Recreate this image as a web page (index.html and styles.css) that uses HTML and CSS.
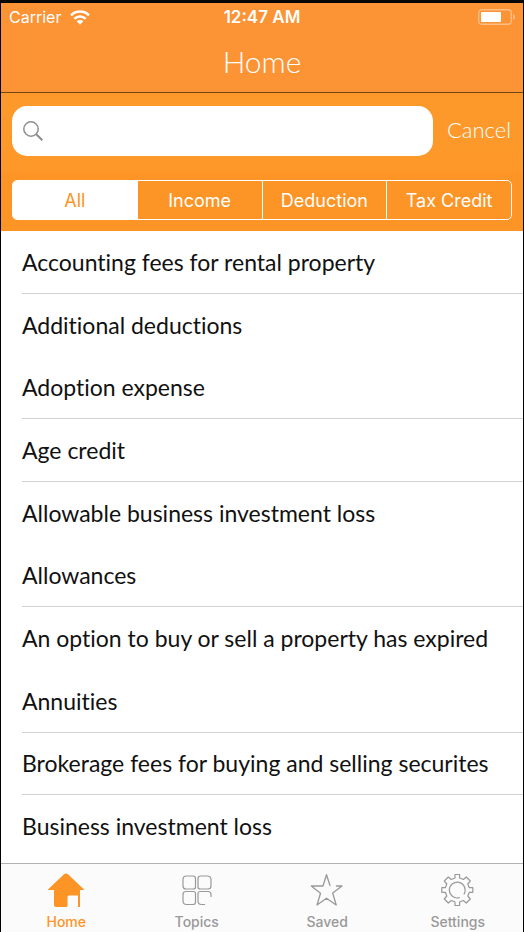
FILE: index.html
```html
<!DOCTYPE html>
<html lang="en">
<head>
<meta charset="utf-8">
<meta name="viewport" content="width=device-width, initial-scale=1">
<title>Home</title>
<link rel="stylesheet" href="styles.css">
</head>
<body>
<header class="navbar">
  <div class="status">
    <div class="carrier">Carrier
      <svg width="20" height="15" viewBox="0 0 20 15" aria-hidden="true">
        <g fill="none" stroke="#fff" stroke-width="2.5">
          <path d="M1 5.3C6 .3 14 .3 19 5.3"/>
          <path d="M4.3 8.8C7.5 5.7 12.500 5.700 15.700 8.800"/>
        </g>
        <path d="M6.700 11.300C8.500 9.500 11.500 9.500 13.300 11.300L10 14.700Z" fill="#fff"/>
      </svg>
    </div>
    <time class="clock">12:47 AM</time>
    <svg class="battery" width="38" height="16" viewBox="0 0 38 16" aria-hidden="true">
      <rect x="1.750" y=".75" width="32.500" height="14.500" rx="3" fill="none" stroke="#fff" stroke-opacity=".4" stroke-width="1.300"/>
      <rect x="4" y="3" width="20" height="10" rx="1" fill="#fff"/>
      <path d="M36 5q2 1 2 3t-2 3z" fill="#fff" fill-opacity=".4"/>
    </svg>
  </div>
  <h1 class="title">Home</h1>
</header>
<section class="filters">
  <form class="search">
    <label class="field">
      <svg width="20" height="20" viewBox="0 0 20 20" fill="none" stroke="#8e8e93" aria-hidden="true">
        <circle cx="8" cy="8" r="7.200" stroke-width="1.500"/>
        <path d="M13 13l6.300 6.300" stroke-width="2"/>
      </svg>
      <input type="text" aria-label="Search">
    </label>
    <button class="cancel" type="button">Cancel</button>
  </form>
  <div class="segments">
    <button class="segment active" type="button" aria-pressed="true">All</button>
    <button class="segment" type="button">Income</button>
    <button class="segment" type="button">Deduction</button>
    <button class="segment" type="button">Tax Credit</button>
  </div>
</section>
<main class="content">
  <ul class="list">
    <li class="row ruled">Accounting fees for rental property</li>
    <li class="row">Additional deductions</li>
    <li class="row ruled">Adoption expense</li>
    <li class="row ruled">Age credit</li>
    <li class="row">Allowable business investment loss</li>
    <li class="row ruled">Allowances</li>
    <li class="row">An option to buy or sell a property has expired</li>
    <li class="row ruled">Annuities</li>
    <li class="row ruled">Brokerage fees for buying and selling securites</li>
    <li class="row">Business investment loss</li>
  </ul>
</main>
<nav class="tabs">
  <a class="tab current" href="#home">
    <svg width="36" height="36" viewBox="0 0 36 36" aria-hidden="true">
      <path d="M16 2.200Q18 .6 20 2.200L36 17.500V18H32V35H30V23.500H21Q19.500 23.500 19.500 25V33.500Q19.500 35 18 35H8Q6 35 6 33V18H0V17.500Z" fill="currentColor"/>
    </svg>
    Home
  </a>
  <a class="tab" href="#topics">
    <svg width="36" height="36" viewBox="0 0 36 36" fill="none" stroke="currentColor" stroke-width="1.200" aria-hidden="true">
      <path d="M7.500 4H14Q16.500 4 16.500 6.500V15Q16.500 17 14.500 17H7Q4 17 4 14V7.500Q4 4 7.500 4Z"/>
      <path d="M21.500 4H28Q32 4 32 7.500V14Q32 17 29 17H21.500Q19 17 19 15V6.500Q19 4 21.500 4Z"/>
      <path d="M7 19.500H14.500Q16.500 19.500 16.500 21.500V30Q16.500 32.500 14 32.500H7.500Q4 32.500 4 29V22.500Q4 19.500 7 19.500Z"/>
      <path d="M32 25V22.500Q32 19.500 29 19.500H21.500Q19 19.500 19 21.500V29Q19 32.500 22.500 32.500H26"/>
    </svg>
    Topics
  </a>
  <a class="tab" href="#saved">
    <svg width="36" height="36" viewBox="0 0 36 36" fill="none" stroke="currentColor" stroke-width="1.300" stroke-linecap="round" stroke-linejoin="round" aria-hidden="true">
      <path d="M21 13.500L17.500 2.700L14 14H2.300L11.500 21.200L8 33L17.500 26.200L27.200 33L23.700 21L33 14H27.500"/>
    </svg>
    Saved
  </a>
  <a class="tab" href="#settings">
    <svg width="36" height="36" viewBox="0.700 0 36 36" fill="none" stroke="currentColor" stroke-width="1.200" stroke-linejoin="round" aria-hidden="true">
      <path d="M15.700 2.500H20.300V6L24 7.500L27 5L31 9L28.500 12L30 15.700H33.500V20.300H30L28.500 24L31 27L27 31L24 28.500L20.300 30V33.500H15.700V30L12 28.500L9 31L5 27L7.500 24L6 20.300H2.500V15.700H6L7.500 12L5 9L9 5L12 7.500L15.700 6Z"/>
      <path d="M24.800 22A7.900 7.900 0 1 0 20 25.700" stroke-linecap="round"/>
    </svg>
    Settings
  </a>
</nav>
</body>
</html>
```
FILE: styles.css
```css
* {
  box-sizing: border-box;
}

body {
  margin: 0;
  min-height: 100vh;
  display: flex;
  flex-direction: column;
  border: 1px solid #000;
  border-top: 3px solid #080808;
  border-bottom: 0;
  background: #fff;
  color: #111;
  font-family: Lato, sans-serif;
  font-variant-ligatures: none;
}

button,
input {
  margin: 0;
  padding: 0;
  border: 0;
  background: none;
  color: inherit;
  font: inherit;
}

.navbar {
  height: 90px;
  border-bottom: 1px solid #6f4717;
  background: #fc9335;
  color: #fff;
}

.status {
  height: 28px;
  padding: 0 8px;
  display: grid;
  grid-template-columns: 1fr auto 1fr;
  align-items: center;
  font: 16px/28px Inter, sans-serif;
}

.carrier {
  display: flex;
  align-items: center;
  gap: 9px;
}

.clock {
  font-size: 17px;
  font-weight: 600;
}

.battery {
  justify-self: end;
}

.title {
  margin: 0;
  text-align: center;
  font-size: 30px;
  font-weight: 300;
  line-height: 60px;
}

.filters {
  padding: 13px 11px 11px;
  background: linear-gradient(#fd992b, #fd9829 55%, #fd9426 60%);
  color: #fff;
}

.search {
  display: flex;
  align-items: center;
  gap: 14px;
}

.field {
  flex: 1;
  min-width: 0;
  height: 50px;
  padding: 0 11px;
  display: flex;
  align-items: center;
  gap: 10px;
  border-radius: 15px;
  background: #fff;
  color: #111;
}

.field input {
  flex: 1;
  min-width: 0;
  height: 100%;
  outline: 0;
  font-size: 23px;
}

.cancel {
  padding: 0 1px 4px 0;
  font-size: 22px;
  font-weight: 300;
}

.segments {
  height: 40px;
  margin-top: 24px;
  display: flex;
  overflow: hidden;
  border: 1px solid #fff;
  border-radius: 5px;
}

.segment {
  flex: 1 1 0;
  border-left: 1px solid #fff;
  font: 18px Inter, sans-serif;
}

.segment:first-child {
  border-left: 0;
}

.segment.active {
  background: #fff;
  color: #fd9426;
}

.content {
  flex: 1;
  display: flex;
  padding-bottom: 5px;
}

.list {
  flex: 1;
  margin: 0;
  padding: 0 0 0 21px;
  display: grid;
  grid-auto-rows: 1fr;
  list-style: none;
  font-size: 23px;
}

.row {
  display: flex;
  align-items: center;
  border-bottom: 1px solid transparent;
}

.row.ruled {
  border-color: #d2d2d4;
}

.tabs {
  height: 69px;
  display: flex;
  border-top: 1px solid #b2b2b2;
  background: #fbfbfb;
}

.tab {
  flex: 1 1 0;
  padding-top: 8px;
  display: flex;
  flex-direction: column;
  align-items: center;
  gap: 6px;
  color: #999;
  font: 500 14px/16px Inter, sans-serif;
  text-decoration: none;
}

.tab.current {
  color: #fd9426;
}
```
